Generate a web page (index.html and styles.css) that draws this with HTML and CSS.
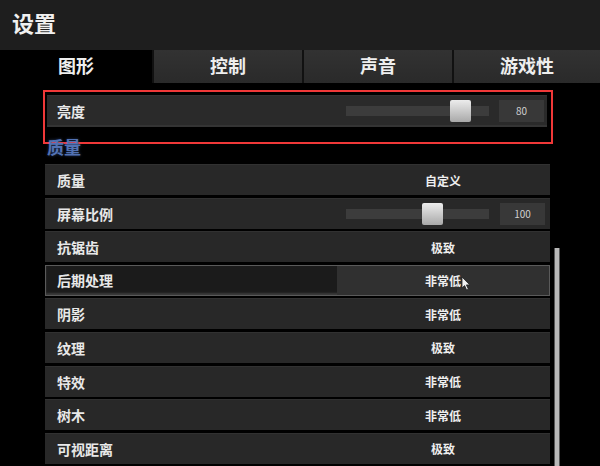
FILE: index.html
```html
<!DOCTYPE html>
<html lang="zh-CN">
<head>
    <meta charset="UTF-8">
    <meta name="viewport" content="width=device-width, initial-scale=1.0">
    <title>设置</title>
    <link rel="stylesheet" href="styles.css">
</head>
<body>

<div class="header">
    <h1 class="title">设置</h1>
</div>

<ul class="tabs">
    <li class="tab active">图形</li>
    <li class="tab">控制</li>
    <li class="tab">声音</li>
    <li class="tab">游戏性</li>
</ul>

<div class="main">
    <div class="content">
        <!-- highlighted brightness setting -->
        <div class="focus-box">
            <div class="row row-brightness">
                <span class="label">亮度</span>
                <div class="value slider-cell">
                    <div class="track"><div class="thumb" style="left: 104px;"></div></div>
                    <span class="num-box">80</span>
                </div>
            </div>
        </div>

        <h2 class="section-title">质量</h2>

        <ul class="settings">
            <li class="row"><span class="label">质量</span><span class="value">自定义</span></li>
            <li class="row">
                <span class="label">屏幕比例</span>
                <div class="value slider-cell">
                    <div class="track"><div class="thumb" style="left: 76px;"></div></div>
                    <span class="num-box">100</span>
                </div>
            </li>
            <li class="row"><span class="label">抗锯齿</span><span class="value">极致</span></li>
            <li class="row hovered">
                <span class="label">后期处理</span>
                <span class="value">非常低
                    <svg class="cursor" width="10" height="15" viewBox="0 0 10 15">
                        <path d="M1 1 L1 12 L3.6 9.6 L5.6 14 L7.4 13.2 L5.4 8.9 L8.8 8.9 Z" fill="#f2f2f2" stroke="#222" stroke-width="0.8"/>
                    </svg>
                </span>
            </li>
            <li class="row"><span class="label">阴影</span><span class="value">非常低</span></li>
            <li class="row"><span class="label">纹理</span><span class="value">极致</span></li>
            <li class="row"><span class="label">特效</span><span class="value">非常低</span></li>
            <li class="row"><span class="label">树木</span><span class="value">非常低</span></li>
            <li class="row"><span class="label">可视距离</span><span class="value">极致</span></li>
        </ul>
    </div>

    <div class="scrollbar">
        <div class="scroll-thumb"></div>
    </div>
</div>

</body>
</html>
```

FILE: styles.css
```css
/* Basic reset */
* {
    margin: 0;
    padding: 0;
    box-sizing: border-box;
}

html {
    overflow: hidden;
}

body {
    font-family: "Noto Sans CJK SC", "Noto Sans", sans-serif;
    background-color: #000;
    color: #e6e6e6;
    width: 600px;
    height: 466px;
    overflow: hidden;
}

/* Top header */
.header {
    height: 50px;
    background-color: #1e1e1e;
    padding-left: 12px;
    display: flex;
    align-items: center;
}

.title {
    font-size: 22px;
    font-weight: bold;
    color: #f0f0f0;
    line-height: 1;
    margin-top: -6px;
}

/* Tab bar */
.tabs {
    list-style-type: none;
    display: grid;
    grid-template-columns: 152px 150px 150px 148px;
    height: 33px;
    background-color: #121212;
}

.tab {
    display: flex;
    align-items: center;
    justify-content: center;
    font-size: 18px;
    font-weight: bold;
    color: #eeeeee;
    background: linear-gradient(#323232, #2a2a2a);
    border-left: 2px solid #111;
    padding-bottom: 3px;
}

.tab.active {
    background: #000;
    border-left: none;
}

/* Main area */
.main {
    display: flex;
    padding-left: 43px;
}

.content {
    width: 510px;
}

/* Red annotation frame */
.focus-box {
    margin-top: 7px;
    height: 54px;
    border: 2px solid #f03838;
    padding: 3px 4px 0 2px;
}

.section-title {
    position: relative;
    height: 20px;
    margin-top: -7px;
    margin-bottom: 7px;
    font-size: 17px;
    line-height: 20px;
    font-weight: bold;
    color: #5272b4;
    padding-left: 4px;
    text-shadow: 0 0 3px rgba(80, 120, 200, 0.5);
}

/* Settings list */
.settings {
    list-style-type: none;
    display: flex;
    flex-direction: column;
    gap: 2.6px;
    width: 505px;
    margin-left: 2px;
}

.row {
    display: grid;
    grid-template-columns: 291px 1fr;
    height: 31px;
    flex-shrink: 0;
    background-color: #282828;
    border-top: 1px solid #313131;
}

.label {
    padding-left: 12px;
    display: flex;
    align-items: center;
    font-size: 14px;
    font-weight: bold;
    color: #e8e8e8;
}

.value {
    position: relative;
    display: flex;
    align-items: center;
    justify-content: center;
    font-size: 12px;
    font-weight: bold;
    color: #eeeeee;
}

/* Brightness row inside the frame */
.row-brightness {
    grid-template-columns: 289px 1fr;
    height: 32px;
    background-color: #2a2a2a;
    border-bottom: 2px solid #343434;
}

.row-brightness .label {
    padding-left: 10px;
}

/* Hovered row */
.row.hovered {
    background-color: #1b1b1b;
    border: 1px solid #5a5a5a;
    box-shadow: inset 0 -2px 2px rgba(150, 150, 150, 0.25);
}

.row.hovered .label {
    padding-left: 11px;
}

.row.hovered .value {
    background-color: #303030;
}

.cursor {
    position: absolute;
    left: 124px;
    top: 10px;
}

/* Slider */
.slider-cell {
    justify-content: flex-start;
    padding-left: 10px;
    gap: 11px;
}

.row-brightness .slider-cell {
    gap: 10px;
}

.track {
    position: relative;
    width: 143px;
    height: 10px;
    background-color: #3c3c3c;
}

.thumb {
    position: absolute;
    top: -6px;
    width: 21px;
    height: 22px;
    border-radius: 2px;
    background: linear-gradient(#ececec, #a9a9a9);
}

.num-box {
    width: 45px;
    height: 22px;
    background-color: #383838;
    display: flex;
    align-items: center;
    justify-content: center;
    font-size: 10px;
    font-weight: normal;
    color: #d0d0d0;
}

/* Scrollbar */
.scrollbar {
    width: 6px;
    margin-left: 1px;
    padding-top: 165px;
}

.scroll-thumb {
    height: 300px;
    background-color: #b8b8b8;
    border-left: 1px solid #555;
    border-right: 1px solid #555;
}
```
